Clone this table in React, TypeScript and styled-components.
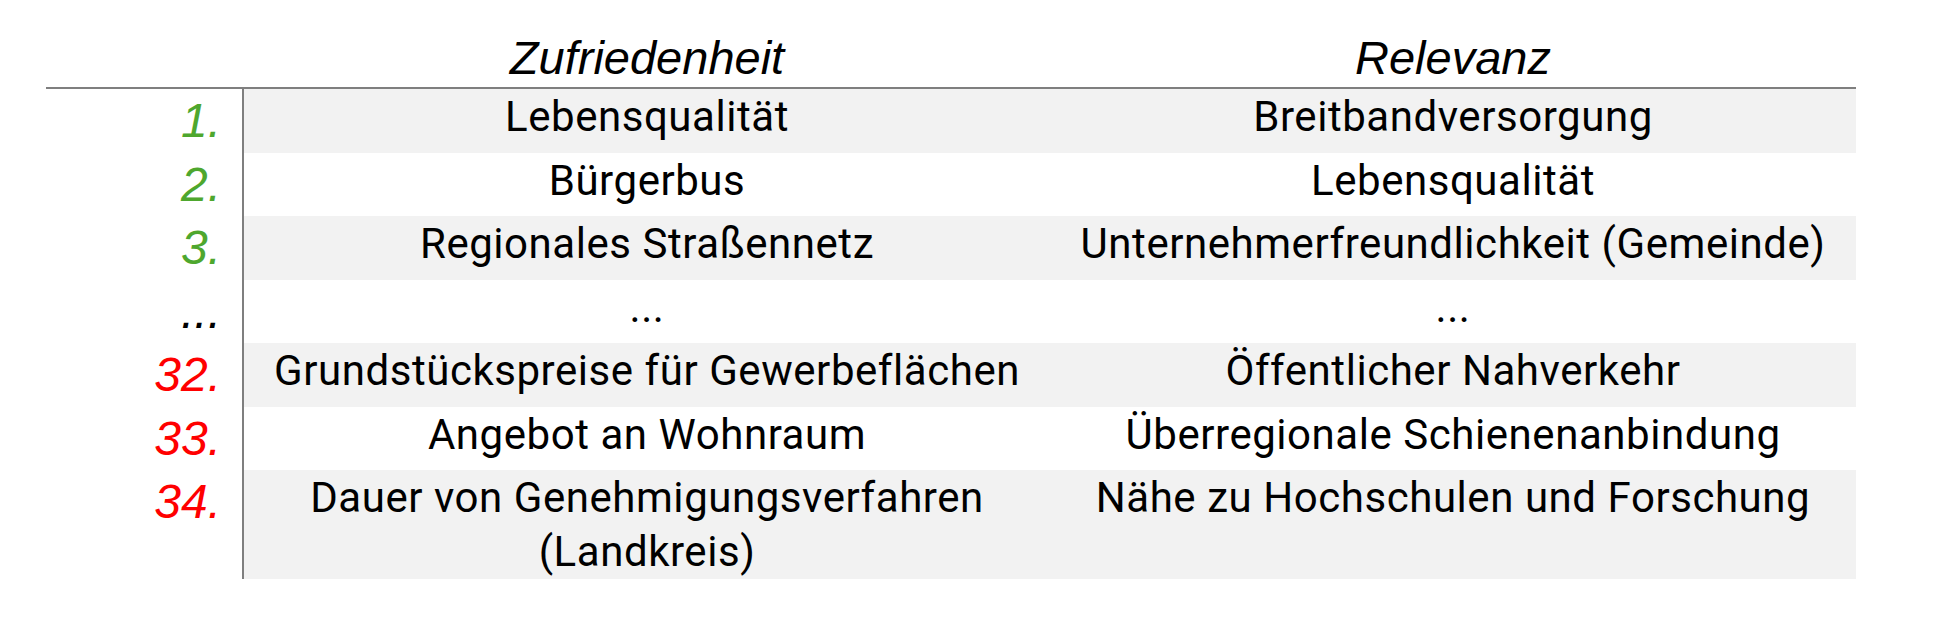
import React from "react";
import styled, { createGlobalStyle } from "styled-components";

const GlobalStyle = createGlobalStyle`
  html, body {
    margin: 0;
    padding: 0;
    background: #ffffff;
  }
  body {
    font-family: Roboto, "Liberation Sans", sans-serif;
    color: #000000;
  }
`;

const Page = styled.div`
  padding-left: 46px;
  width: 1810px;
`;

const HeaderRow = styled.div`
  display: grid;
  grid-template-columns: 198px 806px 806px;
  border-bottom: 2px solid #7f7f7f;
`;

const HeaderCell = styled.div`
  font-family: "Liberation Sans", Arial, sans-serif;
  font-style: italic;
  font-size: 47px;
  line-height: 53px;
  padding-top: 31px;
  padding-bottom: 3px;
  text-align: center;
  color: #000000;
`;

const Row = styled.div`
  display: grid;
  grid-template-columns: 198px 806px 806px;
  min-height: 63.5px;
`;

const RankCell = styled.div<{ $tone: "good" | "bad" | "none" }>`
  border-right: 2px solid #7f7f7f;
  text-align: right;
  padding: 5px 21px 0 0;
  font-family: "Liberation Sans", Arial, sans-serif;
  font-style: italic;
  font-size: 48px;
  line-height: 54px;
  color: ${(p) =>
    p.$tone === "good" ? "#4ea72e" : p.$tone === "bad" ? "#ff0000" : "#000000"};
`;

const DataCell = styled.div<{ $shaded: boolean }>`
  background: ${(p) => (p.$shaded ? "#f2f2f2" : "#ffffff")};
  text-align: center;
  padding-top: 1px;
  font-family: Roboto, "Liberation Sans", sans-serif;
  font-size: 42px;
  letter-spacing: 0.55px;
  line-height: 54px;
  color: #000000;
`;

type Item = {
  rank: string;
  tone: "good" | "bad" | "none";
  left: React.ReactNode;
  right: React.ReactNode;
};

const rows: Item[] = [
  { rank: "1.", tone: "good", left: "Lebensqualität", right: "Breitbandversorgung" },
  { rank: "2.", tone: "good", left: "Bürgerbus", right: "Lebensqualität" },
  {
    rank: "3.",
    tone: "good",
    left: "Regionales Straßennetz",
    right: "Unternehmerfreundlichkeit (Gemeinde)",
  },
  { rank: "...", tone: "none", left: "...", right: "..." },
  {
    rank: "32.",
    tone: "bad",
    left: "Grundstückspreise für Gewerbeflächen",
    right: "Öffentlicher Nahverkehr",
  },
  {
    rank: "33.",
    tone: "bad",
    left: "Angebot an Wohnraum",
    right: "Überregionale Schienenanbindung",
  },
  {
    rank: "34.",
    tone: "bad",
    left: (
      <>
        Dauer von Genehmigungsverfahren
        <br />
        (Landkreis)
      </>
    ),
    right: "Nähe zu Hochschulen und Forschung",
  },
];

export default function App() {
  return (
    <>
      <GlobalStyle />
      <Page>
        <HeaderRow>
          <HeaderCell />
          <HeaderCell>Zufriedenheit</HeaderCell>
          <HeaderCell>Relevanz</HeaderCell>
        </HeaderRow>
        {rows.map((r, i) => (
          <Row key={i}>
            <RankCell $tone={r.tone}>{r.rank}</RankCell>
            <DataCell $shaded={i % 2 === 0}>{r.left}</DataCell>
            <DataCell $shaded={i % 2 === 0}>{r.right}</DataCell>
          </Row>
        ))}
      </Page>
    </>
  );
}
